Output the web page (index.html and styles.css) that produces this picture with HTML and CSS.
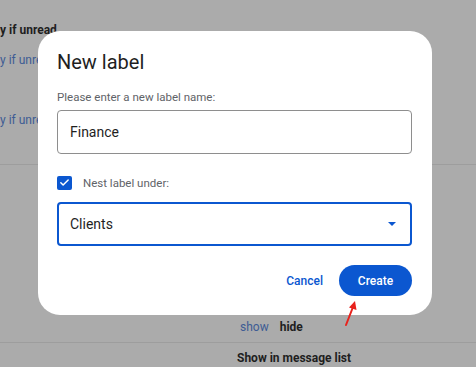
FILE: index.html
```html
<!DOCTYPE html>
<html>
<head>
<meta charset="utf-8">
<link rel="stylesheet" href="styles.css">
</head>
<body>
<div class="page">
  <div class="sec sec1">
    <div class="bg-bold r1">y if unread</div>
    <div class="bg-link r2">y if unrea</div>
    <div class="bg-link r3">y if unrea</div>
  </div>
  <div class="sec sec2">
    <div class="showhide"><span class="bg-link">show</span><span class="bg-bold">hide</span></div>
  </div>
  <div class="sec3">
    <div class="bg-bold">Show in message list</div>
  </div>
</div>

<div class="dialog">
  <div class="title">New label</div>
  <div class="hint">Please enter a new label name:</div>
  <div class="field"><span>Finance</span></div>
  <div class="check-row">
    <span class="checkbox">
      <svg width="11" height="11" viewBox="0 0 24 24"><path d="M4 12.5l5 5L20 6.5" fill="none" stroke="#fff" stroke-width="3.2" stroke-linecap="round" stroke-linejoin="round"/></svg>
    </span>
    <span class="check-label">Nest label under:</span>
  </div>
  <div class="field select"><span>Clients</span><span class="caret"></span></div>
  <div class="actions">
    <span class="cancel">Cancel</span>
    <span class="create">Create</span>
  </div>
</div>

<svg class="arrow" width="20" height="30" viewBox="0 0 20 30">
  <path d="M5 27 L12 9" stroke="#e8221c" stroke-width="2" stroke-linecap="round" fill="none"/>
  <path d="M14 3 L8 9.5 L15.5 12 Z" fill="#e8221c"/>
</svg>
</body>
</html>
```
FILE: styles.css
```css
html, body {
  margin: 0;
  padding: 0;
}
body {
  width: 476px;
  height: 367px;
  overflow: hidden;
  background: #ababab;
  font-family: Roboto, "Liberation Sans", Arial, sans-serif;
  position: relative;
}
.page {
  display: flex;
  flex-direction: column;
}
.sec1 {
  height: 165px;
  border-bottom: 1px solid #9d9d9d;
  display: flex;
  flex-direction: column;
  box-sizing: border-box;
}
.bg-bold {
  font-weight: 700;
  font-size: 12px;
  line-height: 14px;
  color: #1e1e1e;
}
.bg-link {
  font-size: 12px;
  line-height: 14px;
  color: #3d5c94;
}
.r1 { margin-top: 23px; }
.r2 { margin-top: 16px; }
.r3 { margin-top: 46px; }
.sec2 {
  height: 178px;
  border-bottom: 1px solid #9d9d9d;
  box-sizing: border-box;
  display: flex;
  flex-direction: column;
  justify-content: flex-end;
}
.showhide {
  display: flex;
  gap: 11px;
  padding-left: 240px;
  margin-bottom: 8px;
}
.sec3 {
  padding-left: 237px;
  padding-top: 8px;
}

.dialog {
  position: absolute;
  left: 38px;
  top: 31px;
  width: 394px;
  height: 284px;
  box-sizing: border-box;
  background: #fff;
  border-radius: 22px;
  padding: 19px 20px 0 19px;
  display: flex;
  flex-direction: column;
}
.title {
  font-size: 20px;
  line-height: 24px;
  color: #1f1f1f;
}
.hint {
  margin-top: 16px;
  font-size: 11.5px;
  line-height: 14px;
  color: #5f6368;
}
.field {
  margin-top: 6px;
  height: 44px;
  box-sizing: border-box;
  border: 1px solid #8e8e8e;
  border-radius: 4px;
  display: flex;
  align-items: center;
  padding-left: 12px;
  font-size: 14px;
  color: #1f1f1f;
}
.check-row {
  margin-top: 21px;
  height: 15px;
  display: flex;
  align-items: center;
}
.checkbox {
  width: 15px;
  height: 14px;
  border-radius: 2px;
  background: #0b57d0;
  display: flex;
  align-items: center;
  justify-content: center;
}
.check-label {
  margin-left: 11px;
  font-size: 11.5px;
  color: #5f6368;
}
.select {
  margin-top: 12px;
  border: 2px solid #0b57d0;
  padding-left: 11px;
  padding-right: 14px;
  justify-content: space-between;
}
.caret {
  width: 0;
  height: 0;
  border-left: 4px solid transparent;
  border-right: 4px solid transparent;
  border-top: 4px solid #0b57d0;
}
.actions {
  margin-top: 19px;
  display: flex;
  justify-content: flex-end;
  align-items: center;
  gap: 16px;
}
.cancel {
  color: #0b57d0;
  font-size: 12px;
  font-weight: 500;
}
.create {
  width: 73px;
  height: 31px;
  border-radius: 16px;
  background: #0b57d0;
  color: #fff;
  font-size: 12px;
  font-weight: 500;
  display: flex;
  align-items: center;
  justify-content: center;
}
.arrow {
  position: absolute;
  left: 341px;
  top: 298px;
}
```
